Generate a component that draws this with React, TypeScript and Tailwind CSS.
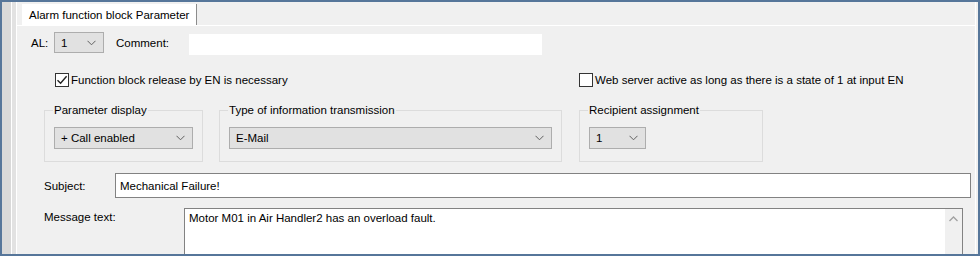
import React from "react";

function Chevron() {
  return (
    <svg width="9" height="6" viewBox="0 0 9 6" className="shrink-0">
      <path d="M0.5 0.8 L4.5 4.8 L8.5 0.8" fill="none" stroke="#606060" strokeWidth="1" />
    </svg>
  );
}

function Select({ value, className }: { value: string; className: string }) {
  return (
    <div
      className={
        "flex items-center justify-between bg-[#e1e1e1] border border-[#adadad] pl-[6px] pr-[7px] " +
        className
      }
    >
      <span>{value}</span>
      <Chevron />
    </div>
  );
}

function Check({ checked }: { checked: boolean }) {
  return (
    <div className="w-[14px] h-[14px] border border-[#333333] bg-white flex items-center justify-center shrink-0">
      {checked && (
        <svg width="12" height="12" viewBox="0 0 12 12">
          <path d="M1.5 6.2 L4.6 9.3 L10.6 2.2" fill="none" stroke="#222" strokeWidth="1.4" />
        </svg>
      )}
    </div>
  );
}

function Group({ title, width, children }: { title: string; width: string; children: React.ReactNode }) {
  return (
    <fieldset className={"border border-[#dcdcdc] h-[59px] pl-[9px] " + width}>
      <legend className="ml-[-1px] px-[1px] leading-[14px]">{title}</legend>
      <div className="pt-[10px]">{children}</div>
    </fieldset>
  );
}

export default function App() {
  return (
    <div className="w-[980px] h-[256px] overflow-hidden border-2 border-[#56769a] bg-[#f0f0f0] flex font-['Liberation_Sans',Arial,sans-serif] text-[11.5px] text-black leading-[14px]">
      <div className="w-[9px] bg-[#d9d9d9] shrink-0" />
      <div className="w-[1px] bg-white shrink-0" />
      <div className="w-[4px] bg-[#e2e2e2] shrink-0" />
      <div className="w-[1px] bg-white shrink-0" />
      <div className="flex-1 flex flex-col pt-[2px] border-r border-white mr-[2px]">
        <div className="flex pl-[5px] border-b border-white">
          <div className="h-[21px] bg-white border-r border-[#8c8c8c] px-[7px] flex items-center">
            Alarm function block Parameter
          </div>
        </div>
        <div className="flex flex-col">
          <div className="flex items-start pl-[14px] pt-[6px]">
            <span className="mt-[4px] w-[23px]">AL:</span>
            <Select value="1" className="w-[50px] h-[21px]" />
            <span className="ml-[12px] mt-[4px] w-[73px]">Comment:</span>
            <div className="w-[353px] h-[21px] bg-white mt-[2px]" />
          </div>
          <div className="flex items-center pl-[38px] mt-[18px]">
            <div className="flex items-center w-[524px] gap-[2px]">
              <Check checked />
              <span>Function block release by EN is necessary</span>
            </div>
            <div className="flex items-center gap-[2px]">
              <Check checked={false} />
              <span>Web server active as long as there is a state of 1 at input EN</span>
            </div>
          </div>
          <div className="flex items-start pl-[27px] mt-[16px]">
            <Group title="Parameter display" width="w-[159px]">
              <Select value="+ Call enabled" className="w-[139px] h-[22px]" />
            </Group>
            <div className="w-[16px]" />
            <Group title="Type of information transmission" width="w-[343px]">
              <Select value="E-Mail" className="w-[323px] h-[22px] pl-[3px]" />
            </Group>
            <div className="w-[17px]" />
            <Group title="Recipient assignment" width="w-[184px]">
              <Select value="1" className="w-[57px] h-[22px]" />
            </Group>
          </div>
          <div className="flex items-center pl-[27px] mt-[11px]">
            <span className="w-[71px]">Subject:</span>
            <div className="w-[856px] h-[25px] bg-white border border-[#828282] flex items-center pl-[4px]">
              Mechanical Failure!
            </div>
          </div>
          <div className="flex items-start pl-[27px] mt-[10px]">
            <span className="w-[140px] mt-[2px]">Message text:</span>
            <div className="w-[779px] h-[60px] bg-white border border-[#828282] flex">
              <div className="flex-1 pl-[4px] pt-[2px]">Motor M01 in Air Handler2 has an overload fault.</div>
              <div className="w-[17px] bg-[#f0f0f0] flex justify-center pt-[7px]">
                <svg width="9" height="6" viewBox="0 0 9 6">
                  <path d="M0.5 5 L4.5 1 L8.5 5" fill="none" stroke="#a0a0a0" strokeWidth="1.3" />
                </svg>
              </div>
            </div>
          </div>
        </div>
      </div>
    </div>
  );
}
